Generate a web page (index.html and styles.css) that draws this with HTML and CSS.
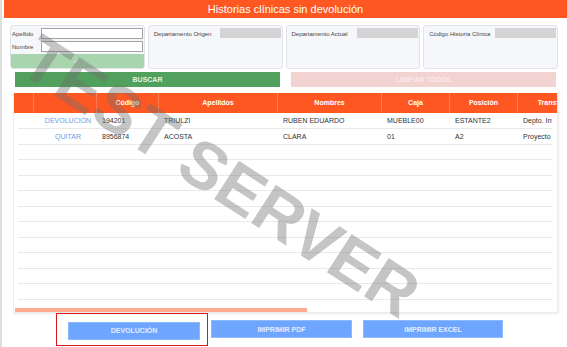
FILE: index.html
```html
<!DOCTYPE html>
<html lang="es">
<head>
    <meta charset="UTF-8">
    <meta name="viewport" content="width=device-width, initial-scale=1.0">
    <title>Historias clínicas sin devolución</title>
    <link rel="stylesheet" href="styles.css">
</head>
<body>
    <div class="page">
        <header class="title-bar">Historias clínicas sin devolución</header>

        <section class="filters">
            <div class="filter-card name-card">
                <label class="field"><span>Apellido</span><input type="text"></label>
                <label class="field"><span>Nombre</span><input type="text"></label>
                <div class="apply-bar">&#10003;</div>
            </div>
            <div class="filter-card">
                <span class="filter-label">Departamento Origen</span>
                <span class="select-stub"></span>
            </div>
            <div class="filter-card">
                <span class="filter-label">Departamento Actual</span>
                <span class="select-stub"></span>
            </div>
            <div class="filter-card">
                <span class="filter-label">Código Historia Clínica</span>
                <span class="select-stub"></span>
            </div>
        </section>

        <div class="actions">
            <button class="btn btn-search">BUSCAR</button>
            <button class="btn btn-clear">LIMPIAR TODOS</button>
        </div>

        <div class="grid">
            <div class="grid-head">
                <div class="row">
                    <div class="c0"></div>
                    <div class="c1"></div>
                    <div class="c2">Código</div>
                    <div class="c3">Apellidos</div>
                    <div class="c4">Nombres</div>
                    <div class="c5">Caja</div>
                    <div class="c6">Posición</div>
                    <div class="c7">Transferencia</div>
                    <div class="c8">Fecha</div>
                </div>
            </div>
            <div class="grid-body">
                <div class="row">
                    <div class="c0"></div>
                    <div class="c1"><a href="#" class="row-link">DEVOLUCIÓN</a></div>
                    <div class="c2">194201</div>
                    <div class="c3">TRIULZI</div>
                    <div class="c4">RUBEN EDUARDO</div>
                    <div class="c5">MUEBLE00</div>
                    <div class="c6">ESTANTE2</div>
                    <div class="c7">Depto. Informática</div>
                    <div class="c8"></div>
                </div>
                <div class="row">
                    <div class="c0"></div>
                    <div class="c1"><a href="#" class="row-link">QUITAR</a></div>
                    <div class="c2">8956874</div>
                    <div class="c3">ACOSTA</div>
                    <div class="c4">CLARA</div>
                    <div class="c5">01</div>
                    <div class="c6">A2</div>
                    <div class="c7">Proyecto Alfa</div>
                    <div class="c8"></div>
                </div>
                <div class="row"></div>
                <div class="row"></div>
                <div class="row"></div>
                <div class="row"></div>
                <div class="row"></div>
                <div class="row"></div>
                <div class="row"></div>
                <div class="row"></div>
                <div class="row"></div>
                <div class="row"></div>
            </div>
            <div class="scroll-thumb"></div>
        </div>

        <div class="footer">
            <div class="highlight">
                <button class="btn btn-blue btn-return">DEVOLUCIÓN</button>
            </div>
            <button class="btn btn-blue btn-pdf">IMPRIMIR PDF</button>
            <button class="btn btn-blue btn-excel">IMPRIMIR EXCEL</button>
        </div>

        <div class="watermark">TEST SERVER</div>
    </div>
</body>
</html>
```

FILE: styles.css
```css
* {
    box-sizing: border-box;
}
body {
    margin: 0;
    background: #fff;
    font-family: "Liberation Sans", Arial, sans-serif;
    color: #333;
}
.page {
    position: relative;
    height: 347px;
    border-left: 2px solid #dedede;
    padding-left: 2px;
    overflow: hidden;
}
.title-bar {
    height: 18px;
    line-height: 18px;
    background: #ff5722;
    color: #fff;
    text-align: center;
    font-size: 11px;
}

/* filtros */
.filters {
    display: grid;
    grid-template-columns: repeat(4, 1fr);
    gap: 3px;
    height: 44px;
    margin: 7px 9px 0 6px;
}
.filter-card {
    display: flex;
    align-items: flex-start;
    padding: 2px 1px 0 5px;
    background: #f6f7fb;
    border: 1px solid #e2e3ea;
    border-radius: 3px;
    font-size: 6px;
    color: #444;
}
.filter-label {
    line-height: 10px;
    margin-top: 1px;
}
.select-stub {
    width: 61px;
    height: 10px;
    margin-left: auto;
    background: #d4d4d4;
}
.name-card {
    flex-direction: column;
    padding: 2px 0 0 0;
    overflow: hidden;
}
.field {
    display: flex;
    align-items: center;
    width: 100%;
    height: 11px;
    margin-bottom: 2px;
    padding: 0 1px 0 1px;
}
.field span {
    width: 29px;
}
.field input {
    width: 102px;
    height: 11px;
    padding: 0;
    border: 1px solid #a3a3a3;
    background: #fff;
}
.apply-bar {
    width: 100%;
    height: 14px;
    margin-top: auto;
    background: #a9d5ae;
    color: #e9f5ea;
    text-align: center;
    font-size: 9px;
    line-height: 14px;
}

/* botones */
.actions {
    display: flex;
    gap: 11px;
    height: 15px;
    margin: 3px 11px 0 11px;
}
.btn {
    border: none;
    padding: 0;
    font-family: "Liberation Sans", Arial, sans-serif;
    font-size: 7px;
    font-weight: bold;
    cursor: pointer;
}
.actions .btn {
    flex: 1;
}
.btn-search {
    background: #52a05d;
    color: #e3f2e4;
}
.btn-clear {
    background: #f3d2d2;
    color: #fbe9e9;
}

/* tabla */
.grid {
    height: 220px;
    margin: 6px 9px 0 9px;
    background: #fff;
    border: 1px solid #ececec;
    border-top: none;
    box-shadow: 1px 1px 2px rgba(0,0,0,0.08);
    overflow: hidden;
}
.row {
    display: flex;
    white-space: nowrap;
}
.row > div {
    flex: none;
    overflow: hidden;
}
.c0 { width: 21px; }
.c1 { width: 63px; }
.c2 { width: 62px; }
.c3 { width: 119px; }
.c4 { width: 104px; }
.c5 { width: 68px; }
.c6 { width: 68px; }
.c7 { width: 86px; }
.c8 { width: 400px; }
.grid-head {
    margin-left: -1px;
    background: #ff5722;
    overflow: hidden;
}
.grid-head .row {
    height: 20px;
}
.grid-head .row > div {
    line-height: 20px;
    text-align: center;
    color: #fff;
    font-size: 7px;
    font-weight: bold;
    border-right: 1px solid rgba(255,255,255,0.22);
}
.grid-body {
    margin: 0 5px 0 4px;
    overflow: hidden;
}
.grid-body .row {
    height: 15.5px;
    border-bottom: 1px solid #e9e9e9;
}
.grid-body .row:first-child {
    height: 16px;
}
.grid-body .row > div {
    padding-left: 5px;
    font-size: 7px;
    line-height: 15px;
    color: #333;
}
.grid-body .c0 {
    width: 16px;
}
.grid-body .c1 {
    padding-left: 0;
    text-align: center;
}
.row-link {
    color: #6d9be8;
    text-decoration: none;
}
.scroll-thumb {
    width: 292px;
    height: 4px;
    margin: 8px 0 0 1px;
    background: #ffab91;
}

/* pie */
.footer {
    display: flex;
    align-items: center;
    padding-left: 52px;
}
.highlight {
    padding: 5px 7px 5px 11px;
    border: 1px solid #d51b1b;
}
.btn-blue {
    height: 18px;
    background: #6ea6ff;
    border: 1px solid #8dbaff;
    color: #e3edff;
}
.btn-return {
    width: 132px;
}
.btn-pdf {
    width: 141px;
    margin-left: 3px;
}
.btn-excel {
    width: 140px;
    margin-left: 11px;
}

.watermark {
    position: absolute;
    left: 219px;
    top: 176px;
    transform: translate(-50%, -50%) rotate(33deg);
    white-space: nowrap;
    font-size: 66px;
    font-weight: bold;
    color: rgba(110,110,110,0.4);
    pointer-events: none;
}
```
